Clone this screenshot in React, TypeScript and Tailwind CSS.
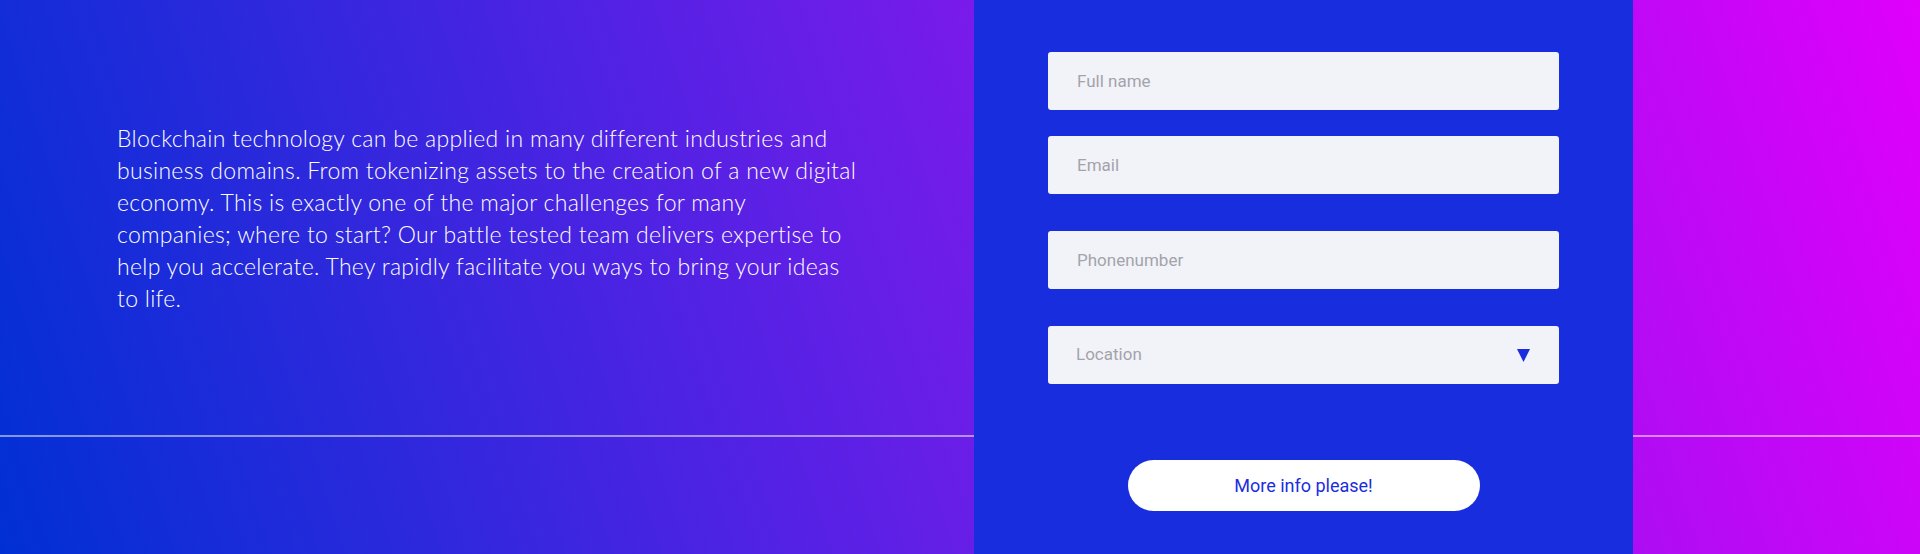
import React from "react";

const fields = [
	{ id: "full_name", placeholder: "Full name", type: "text", mt: "" },
	{ id: "email", placeholder: "Email", type: "email", mt: "mt-[26px]" },
	{ id: "phone", placeholder: "Phonenumber", type: "tel", mt: "mt-[37px]" },
];

const lines = [
	"Blockchain technology can be applied in many different industries and",
	"business domains. From tokenizing assets to the creation of a new digital",
	"economy. This is exactly one of the major challenges for many",
	"companies; where to start? Our battle tested team delivers expertise to",
	"help you accelerate. They rapidly facilitate you ways to bring your ideas",
	"to life.",
];

const App = () => {
	return (
		<div className="relative h-[554px] w-[1920px] overflow-hidden bg-[linear-gradient(72deg,#0030d4_0%,#6a1ee8_48%,#df00fc_100%)] font-['Roboto',sans-serif]">
			{/* divider line, runs under the form panel */}
			<div className="absolute left-0 right-0 top-[435px] h-[2px] bg-white/50" />

			<div className="flex h-full">
				<div className="w-[974px] shrink-0 pl-[117px] pt-[122px]">
					<p className="w-[800px] font-['Lato',sans-serif] text-[23px] font-light leading-[32px] tracking-[0.3px] text-white">
						{lines.map((l) => (
							<span key={l} className="block whitespace-nowrap">
								{l}
							</span>
						))}
					</p>
				</div>

				<form
					onSubmit={(e) => e.preventDefault()}
					className="relative z-10 flex h-full w-[659px] shrink-0 flex-col items-center bg-[#182ddd] pt-[52px]"
				>
					<div className="flex w-[511px] flex-col">
						{fields.map((f) => (
							<input
								key={f.id}
								id={f.id}
								type={f.type}
								placeholder={f.placeholder}
								className={`${f.mt} h-[58px] w-full rounded-[3px] bg-[#f2f3f8] px-[29px] text-[17px] text-[#555] outline-none placeholder:text-[#a3a3ab]`}
							/>
						))}
						<div className="mt-[37px] flex h-[58px] w-full items-center justify-between rounded-[3px] bg-[#f2f3f8] pl-[28px] pr-[29px]">
							<span className="text-[17px] text-[#a3a3ab]">Location</span>
							<svg width="13" height="13" viewBox="0 0 13 13">
								<polygon points="0,0 13,0 6.5,13" fill="#1a2ddf" />
							</svg>
						</div>
					</div>
					<button
						type="submit"
						className="mt-[76px] h-[51px] w-[352px] rounded-full bg-white text-[18px] text-[#1a2ddf]"
					>
						More info please!
					</button>
				</form>

				<div className="flex-1" />
			</div>
		</div>
	);
};

export default App;
